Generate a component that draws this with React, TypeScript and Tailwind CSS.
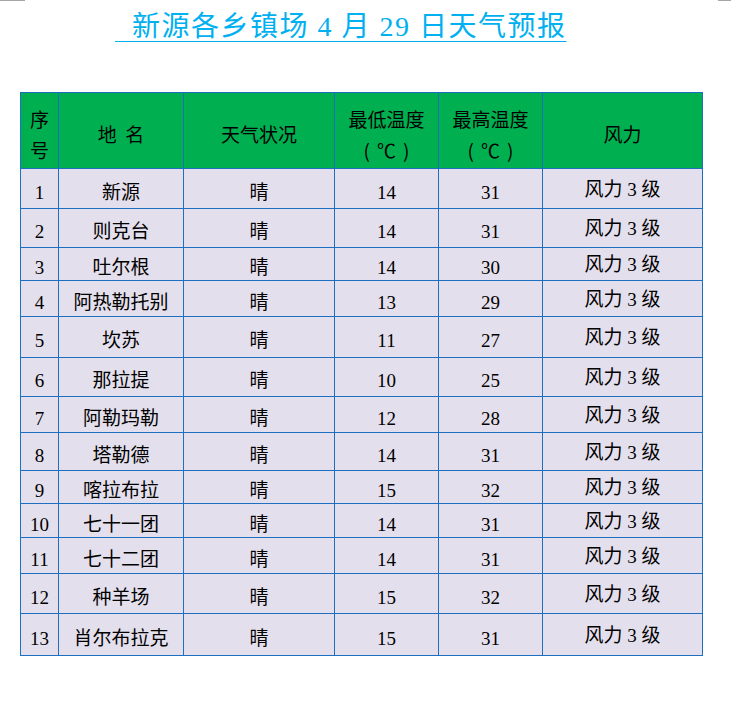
const rows = [
  { no: 1, name: '新源', low: 14, high: 31, h: 'h-[40px]' },
  { no: 2, name: '则克台', low: 14, high: 31, h: 'h-[39px]' },
  { no: 3, name: '吐尔根', low: 14, high: 30, h: 'h-[33px]' },
  { no: 4, name: '阿热勒托别', low: 13, high: 29, h: 'h-[36px]' },
  { no: 5, name: '坎苏', low: 11, high: 27, h: 'h-[41px]' },
  { no: 6, name: '那拉提', low: 10, high: 25, h: 'h-[39px]' },
  { no: 7, name: '阿勒玛勒', low: 12, high: 28, h: 'h-[36px]' },
  { no: 8, name: '塔勒德', low: 14, high: 31, h: 'h-[38px]' },
  { no: 9, name: '喀拉布拉', low: 15, high: 32, h: 'h-[33px]' },
  { no: 10, name: '七十一团', low: 14, high: 31, h: 'h-[34px]' },
  { no: 11, name: '七十二团', low: 14, high: 31, h: 'h-[36px]' },
  { no: 12, name: '种羊场', low: 15, high: 32, h: 'h-[40px]' },
  { no: 13, name: '肖尔布拉克', low: 15, high: 31, h: 'h-[42px]' },
];

const cell = 'border border-[#1f6fc0] text-center align-middle p-0';
const head = `${cell} font-normal pt-[6px]`;
const body = `${cell} pt-[8px]`;

function Unit() {
  return (
    <span>
      <span className="mr-[7px]">(</span>℃<span className="ml-[7px]">)</span>
    </span>
  );
}

export default function App() {
  return (
    <div
      className="relative min-h-[702px] w-[731px] bg-white text-black"
      style={{ fontFamily: '"Liberation Serif", "Noto Sans CJK SC", serif' }}
    >
      {/* page corner marks */}
      <div className="absolute left-0 top-0 h-px w-[25px] bg-[#a6a6a6]" />
      <div className="absolute right-0 top-0 h-px w-[13px] bg-[#a6a6a6]" />

      <div className="pl-[115px] pt-[10px] h-[92px]">
        <span className="text-[28px] leading-[34px] tracking-[1.5px] text-[#00b0f0] underline decoration-1 underline-offset-[5px] whitespace-pre">
          {'  新源各乡镇场 4 月 29 日天气预报'}
        </span>
      </div>

      <table className="ml-[20px] w-[682px] table-fixed border-collapse text-[19px]">
        <colgroup>
          <col className="w-[38px]" />
          <col className="w-[125px]" />
          <col className="w-[151px]" />
          <col className="w-[104px]" />
          <col className="w-[104px]" />
          <col className="w-[160px]" />
        </colgroup>
        <thead>
          <tr
            className="h-[76px] bg-[#00b050] leading-[31px]"
            style={{ fontFamily: '"Noto Sans CJK SC", sans-serif' }}
          >
            <th className={head}>序<br />号</th>
            <th className={head}>地&nbsp;&nbsp;名</th>
            <th className={head}>天气状况</th>
            <th className={head}>最低温度<br /><Unit /></th>
            <th className={head}>最高温度<br /><Unit /></th>
            <th className={head}>风力</th>
          </tr>
        </thead>
        <tbody className="bg-[#e4dfec] leading-[20px]">
          {rows.map((r) => (
            <tr key={r.no} className={r.h}>
              <td className={body}>{r.no}</td>
              <td className={body}>{r.name}</td>
              <td className={body}>晴</td>
              <td className={body}>{r.low}</td>
              <td className={body}>{r.high}</td>
              <td className={`${cell} pt-[2px]`}>风力 3 级</td>
            </tr>
          ))}
        </tbody>
      </table>
    </div>
  );
}
